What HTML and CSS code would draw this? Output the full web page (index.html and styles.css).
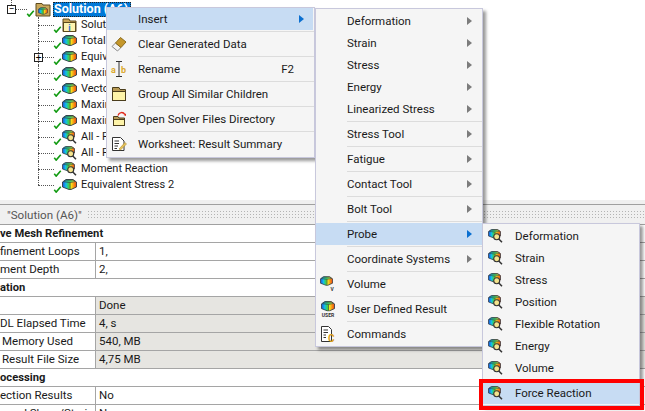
FILE: index.html
```html
<!DOCTYPE html>
<html lang="en">
<head>
<meta charset="utf-8">
<title>Solution context menu</title>
<link rel="stylesheet" href="styles.css">
</head>
<body>
<svg class="defs" width="0" height="0" aria-hidden="true">
  <defs>
    <linearGradient id="spec" x1="0" y1="0" x2="1" y2="0"><stop offset="0" stop-color="#1c4fe0"/><stop offset=".25" stop-color="#12c0e8"/><stop offset=".45" stop-color="#3cd24a"/><stop offset=".62" stop-color="#f8e41a"/><stop offset="1" stop-color="#f04010"/></linearGradient>
    <linearGradient id="top" x1="0" y1="0" x2="1" y2="0"><stop offset="0" stop-color="#1494c8"/><stop offset=".55" stop-color="#3cc860"/><stop offset="1" stop-color="#e8d838"/></linearGradient>
    <symbol id="cube" viewBox="0 0 15 11">
      <path d="M4 .5H11L14.500 3V8L9 10.500H7L.5 8V3Z" fill="url(#spec)" stroke="#2f3c42" stroke-width=".9"/>
      <path d="M1.500 2.800 4.500 1.100H10.800L13.400 2.600 8 3.600Z" fill="url(#top)" stroke="#2f3c42" stroke-width=".6"/>
      <path d="M8 3.600V10" stroke="#2f3c42" stroke-width=".7" fill="none"/>
    </symbol>
    <symbol id="probe" viewBox="0 0 15 14">
      <use href="#cube" width="13" height="9.500"/>
      <circle cx="8.700" cy="7.700" r="3" fill="#f4e48c" stroke="#333" stroke-width="1.100"/>
      <path d="M10.800 9.900 14 13.300" stroke="#333" stroke-width="1.500"/>
    </symbol>
  </defs>
</svg>

<section class="tree">
  <div class="root">
    <span class="expander">&#8722;</span>
    <svg class="check" viewBox="0 0 9 8"><path d="M.8 4.200 3 7 8.200 .8" class="tick"/></svg>
    <svg class="root-icon" viewBox="0 0 16 15">
      <path d="M1 4V1.500H7L8 3H15V14H1Z" fill="#c9a75a" stroke="#5c4a1e"/>
      <use href="#cube" x="3" y="5" width="10" height="8"/>
    </svg>
    <span class="root-label">Solution (A6)</span>
  </div>
  <ul class="nodes">
    <li class="node">
      <svg class="check" viewBox="0 0 9 8"><path d="M.8 4.200 3 7 8.200 .8" class="tick"/></svg>
      <svg class="tree-icon tall" viewBox="0 0 15 14">
        <path d="M1 4V1H7L8 3H14V13.500H1Z" fill="#c9a75a" stroke="#5c4a1e"/>
        <rect x="1.500" y="4.500" width="12" height="9" fill="#fdf4b0" stroke="#5c4a1e"/>
        <text x="7.500" y="12.500" class="info-i">i</text>
      </svg>
      <span>Solution Information</span>
    </li>
    <li class="node"><svg class="check" viewBox="0 0 9 8"><path d="M.8 4.200 3 7 8.200 .8" class="tick"/></svg><svg class="tree-icon"><use href="#cube"/></svg><span>Total Deformation</span></li>
    <li class="node"><span class="expander plus">+</span><svg class="check" viewBox="0 0 9 8"><path d="M.8 4.200 3 7 8.200 .8" class="tick"/></svg><svg class="tree-icon"><use href="#cube"/></svg><span>Equivalent Stress</span></li>
    <li class="node"><svg class="check" viewBox="0 0 9 8"><path d="M.8 4.200 3 7 8.200 .8" class="tick"/></svg><svg class="tree-icon"><use href="#cube"/></svg><span>Maximum Principal Stress</span></li>
    <li class="node"><svg class="check" viewBox="0 0 9 8"><path d="M.8 4.200 3 7 8.200 .8" class="tick"/></svg><svg class="tree-icon"><use href="#cube"/></svg><span>Vector Principal Stress</span></li>
    <li class="node"><svg class="check" viewBox="0 0 9 8"><path d="M.8 4.200 3 7 8.200 .8" class="tick"/></svg><svg class="tree-icon"><use href="#cube"/></svg><span>Maximum Shear Stress</span></li>
    <li class="node"><svg class="check" viewBox="0 0 9 8"><path d="M.8 4.200 3 7 8.200 .8" class="tick"/></svg><svg class="tree-icon"><use href="#cube"/></svg><span>Maximum Principal Elastic</span></li>
    <li class="node"><svg class="check" viewBox="0 0 9 8"><path d="M.8 4.200 3 7 8.200 .8" class="tick"/></svg><svg class="tree-icon tall"><use href="#probe"/></svg><span>All - Force Reactions</span></li>
    <li class="node"><svg class="check" viewBox="0 0 9 8"><path d="M.8 4.200 3 7 8.200 .8" class="tick"/></svg><svg class="tree-icon tall"><use href="#probe"/></svg><span>All - Force Reactions - Fixed Supports</span></li>
    <li class="node"><svg class="check" viewBox="0 0 9 8"><path d="M.8 4.200 3 7 8.200 .8" class="tick"/></svg><svg class="tree-icon tall"><use href="#probe"/></svg><span>Moment Reaction</span></li>
    <li class="node node-last"><svg class="check" viewBox="0 0 9 8"><path d="M.8 4.200 3 7 8.200 .8" class="tick"/></svg><svg class="tree-icon"><use href="#cube"/></svg><span>Equivalent Stress 2</span></li>
  </ul>
</section>

<section class="details">
  <header class="details-title"><span>"Solution (A6)"</span><i class="grip"></i></header>
  <div class="group">ve Mesh Refinement</div>
  <div class="row"><div class="label">finement Loops</div><div class="value">1,</div></div>
  <div class="row"><div class="label">ment Depth</div><div class="value">2,</div></div>
  <div class="group">ation</div>
  <div class="row readonly"><div class="label"></div><div class="value">Done</div></div>
  <div class="row readonly"><div class="label">DL Elapsed Time</div><div class="value">4, s</div></div>
  <div class="row readonly"><div class="label shifted">Memory Used</div><div class="value">540, MB</div></div>
  <div class="row readonly"><div class="label shifted">Result File Size</div><div class="value">4,75 MB</div></div>
  <div class="group">ocessing</div>
  <div class="row"><div class="label">ection Results</div><div class="value">No</div></div>
  <div class="row"><div class="label indented">ned Shear/Strain</div><div class="value">No</div></div>
</section>

<nav class="menu menu-main">
  <div class="item active"><span class="slot"></span><span class="text">Insert</span><i class="arrow"></i></div>
  <hr>
  <div class="item"><span class="slot"><svg class="ico" viewBox="0 0 16 16"><path d="M1 10.500 4.500 7 10 11.500 6.500 15Z" fill="#f4f4f4" stroke="#8a8a8a"/><path d="M4.500 7 9.500 1.500 15 6 10 11.500Z" fill="#c5972a" stroke="#8a6a1c"/></svg></span><span class="text">Clear Generated Data</span></div>
  <hr>
  <div class="item"><span class="slot"><svg class="ico" viewBox="0 0 16 16"><path d="M5 .5H11M8 .5V15.500M5 15.500H11" stroke="#333" fill="none"/><text x="0" y="12" class="ab">a</text><text x="10" y="12" class="ab">b</text></svg></span><span class="text">Rename</span><span class="key">F2</span></div>
  <hr>
  <div class="item"><span class="slot"><svg class="ico" viewBox="0 0 16 16"><path d="M1.500 14.500V1.500H8L9 3.500H14.500V14.500Z" fill="#b79a55" stroke="#4a3d1c"/><rect x="1.500" y="5.500" width="13" height="9" fill="#fdf3a8" stroke="#4a3d1c"/></svg></span><span class="text">Group All Similar Children</span></div>
  <hr>
  <div class="item"><span class="slot"><svg class="ico" viewBox="0 0 16 16"><path d="M2.500 14.500V5.500H7L8 7H13.500V14.500Z" fill="#b79a55" stroke="#4a3d1c"/><rect x="2.500" y="8.500" width="11" height="6" fill="#fdf3a8" stroke="#4a3d1c"/><path d="M7 4.500C8 1 12 .5 14 3.500" fill="none" stroke="#e02a1c" stroke-width="1.300"/><path d="M15 5 12.500 4 15 2.500Z" fill="#e02a1c"/></svg></span><span class="text">Open Solver Files Directory</span></div>
  <hr>
  <div class="item"><span class="slot"><svg class="ico" viewBox="0 0 16 16"><path d="M1.500 1.500H9.500L13 5V14.500H1.500Z" fill="#fff" stroke="#333"/><path d="M3.500 5H8M3.500 7.500H8M3.500 10H7M3.500 12.500H6" stroke="#333"/><path d="M8 13 14 6.500 15.500 8 9.500 14Z" fill="#e9c45a" stroke="#a98a2c" stroke-width=".6"/></svg></span><span class="text">Worksheet: Result Summary</span></div>
</nav>

<nav class="menu menu-insert">
  <div class="item"><span class="slot"></span><span class="text">Deformation</span><i class="arrow"></i></div>
  <div class="item"><span class="slot"></span><span class="text">Strain</span><i class="arrow"></i></div>
  <div class="item"><span class="slot"></span><span class="text">Stress</span><i class="arrow"></i></div>
  <div class="item"><span class="slot"></span><span class="text">Energy</span><i class="arrow"></i></div>
  <div class="item"><span class="slot"></span><span class="text">Linearized Stress</span><i class="arrow"></i></div>
  <hr>
  <div class="item"><span class="slot"></span><span class="text">Stress Tool</span><i class="arrow"></i></div>
  <hr>
  <div class="item"><span class="slot"></span><span class="text">Fatigue</span><i class="arrow"></i></div>
  <hr>
  <div class="item"><span class="slot"></span><span class="text">Contact Tool</span><i class="arrow"></i></div>
  <hr>
  <div class="item"><span class="slot"></span><span class="text">Bolt Tool</span><i class="arrow"></i></div>
  <hr>
  <div class="item active"><span class="slot"></span><span class="text">Probe</span><i class="arrow"></i></div>
  <hr>
  <div class="item"><span class="slot"></span><span class="text">Coordinate Systems</span><i class="arrow"></i></div>
  <hr>
  <div class="item"><span class="slot"><svg class="ico" viewBox="0 0 16 16"><use href="#cube" width="13" height="10"/><text x="10.500" y="15" class="tag">V</text></svg></span><span class="text">Volume</span></div>
  <hr>
  <div class="item"><span class="slot"><svg class="ico" viewBox="0 0 16 16"><use href="#cube" x="1" width="14" height="10.500"/><text x="8" y="16" class="tag tag-user">USER</text></svg></span><span class="text">User Defined Result</span></div>
  <hr>
  <div class="item"><span class="slot"><svg class="ico" viewBox="0 0 16 16"><path d="M1.500 .5H8.500L11.500 3.500V15.500H1.500Z" fill="#fff" stroke="#333"/><path d="M3.500 4H8M3.500 6.500H8M3.500 9H6M3.500 11.500H6" stroke="#333"/><text x="8" y="15.500" class="c-mark">C</text></svg></span><span class="text">Commands</span></div>
</nav>

<nav class="menu menu-probe">
  <div class="item"><span class="slot"><svg class="ico probe-ico"><use href="#probe"/></svg></span><span class="text">Deformation</span></div>
  <div class="item"><span class="slot"><svg class="ico probe-ico"><use href="#probe"/></svg></span><span class="text">Strain</span></div>
  <div class="item"><span class="slot"><svg class="ico probe-ico"><use href="#probe"/></svg></span><span class="text">Stress</span></div>
  <div class="item"><span class="slot"><svg class="ico probe-ico"><use href="#probe"/></svg></span><span class="text">Position</span></div>
  <div class="item"><span class="slot"><svg class="ico probe-ico"><use href="#probe"/></svg></span><span class="text">Flexible Rotation</span></div>
  <div class="item"><span class="slot"><svg class="ico probe-ico"><use href="#probe"/></svg></span><span class="text">Energy</span></div>
  <div class="item"><span class="slot"><svg class="ico probe-ico"><use href="#probe"/></svg></span><span class="text">Volume</span></div>
  <hr>
  <div class="item active"><span class="slot"><svg class="ico probe-ico"><use href="#probe"/></svg></span><span class="text">Force Reaction</span></div>
</nav>

<div class="callout"></div>
</body>
</html>
```
FILE: styles.css
```css
* { box-sizing: border-box; }
html, body { margin: 0; height: 100%; }
body {
  position: relative;
  width: 645px;
  height: 411px;
  overflow: hidden;
  background: #fff;
  color: #1a1a1a;
  font: 11.5px/16px Roboto, sans-serif;
}
.defs { position: absolute; }

/* tree */
.tree { height: 200px; padding-top: 1px; }
.root { position: relative; display: flex; align-items: center; height: 16px; padding-left: 7px; }
.root::before { content: ""; position: absolute; left: 16px; width: 11px; top: 8px; border-top: 1px dotted #555; }
.root::after { content: ""; position: absolute; left: 11px; top: -1px; height: 7px; border-left: 1px dotted #555; }
.expander {
  position: relative; z-index: 1;
  display: flex; align-items: center; justify-content: center;
  width: 9px; height: 9px;
  border: 1px solid #222; background: #fff;
  font-size: 10px; line-height: 1; color: #000;
}
.root .check { margin-left: 10px; }
.check { position: relative; z-index: 1; flex: none; width: 9px; height: 7px; align-self: flex-end; }
.tick { fill: none; stroke: #109a10; stroke-width: 1.8; }
.tree-icon { flex: none; width: 15px; height: 11px; align-self: flex-start; margin-top: 2px; }
.tree-icon.tall { height: 14px; margin-top: 1px; }
.root-icon { flex: none; width: 16px; height: 15px; }
.root-label {
  margin-left: 2px; width: 78px; height: 15px;
  padding-left: 1px;
  background: #0078d7; color: #fff; font-size: 12.5px; font-weight: 700; line-height: 14px;
  outline: 1px dotted #222; outline-offset: -1px; white-space: nowrap; overflow: hidden;
}
.nodes { margin: 0; padding: 0; list-style: none; font-size: 11px; }
.node {
  position: relative;
  display: flex; align-items: center;
  height: 16px; padding-left: 53px; white-space: nowrap;
}
.node > span:last-child { margin-left: 4px; }
.node::before { content: ""; position: absolute; left: 38px; top: 0; bottom: 0; border-left: 1px dotted #555; }
.node::after { content: ""; position: absolute; left: 38px; width: 16px; top: 8px; border-top: 1px dotted #555; }
.node-last::before { bottom: 8px; }
.plus { position: absolute; left: 34px; top: 4px; z-index: 2; }

/* details */
.details { border-top: 4px solid #f0f0f0; }
.details-title {
  display: flex; align-items: center; gap: 5px;
  height: 21px; padding-left: 7px;
  background: #f0f0f0; color: #555;
  border-top: 1px solid #a0a0a0; border-bottom: 1px solid #a0a0a0;
  font-size: 11.6px; white-space: nowrap;
}
.grip { flex: 1; height: 9px; background: radial-gradient(circle, #b4b4b4 .7px, transparent 1px) 0 0 / 3px 3px; }
.group, .row { height: 18px; border-bottom: 1px solid #a5a5a5; line-height: 17px; white-space: nowrap; }
.group { font-size: 11.2px; font-weight: 700; line-height: 18px; }
.row { display: flex; }
.label { flex: none; width: 96px; border-right: 1px solid #a5a5a5; overflow: hidden; }
.label.shifted { padding-left: 2px; }
.label.indented { padding-left: 8px; }
.value { flex: 1; padding-left: 3px; }
.readonly .value { background: #e6e5e1; }

/* menus */
.menu {
  position: absolute;
  display: flex; flex-direction: column;
  background: #f5f5f5;
  border: 1px solid #c8c8dc;
  box-shadow: 3px 3px 3px rgba(0, 0, 0, .4);
}
.menu-main { left: 106px; top: 7px; width: 209px; padding: 0 1px 0 0; height: 151px; }
.menu-insert { left: 315px; top: 8px; width: 168px; padding: 1px 0; }
.menu-probe { left: 482px; top: 223px; width: 158px; padding: 1px 0; }
.item { display: flex; align-items: center; flex: none; height: 22px; white-space: nowrap; }
.slot { flex: none; width: 31px; height: 16px; padding-left: 4px; display: flex; align-items: center; }
.menu-probe .slot { width: 32px; padding-left: 5px; }
.ico { display: block; width: 16px; height: 16px; overflow: visible; }
.probe-ico { width: 15px; height: 14px; }
.text { flex: 1; }
.key { margin-right: 19px; }
.active { background: #c7dcf3; }
.arrow {
  width: 0; height: 0; margin-right: 10px;
  border-left: 5px solid #7c7c7c;
  border-top: 4px solid transparent; border-bottom: 4px solid transparent;
}
.active .arrow { border-left-color: #0a6fd0; }
.menu hr {
  flex: none; height: 1px; margin: 1px 0 1px 31px;
  border: 0; background: #dcdcdc;
}
.menu-main .active .arrow { margin-right: 9px; }
.menu-main hr { margin-right: -1px; }
.menu-probe hr { margin-left: 32px; }

/* svg text marks */
.info-i { font: 700 9px Roboto, sans-serif; fill: #2a6fd0; text-anchor: middle; }
.ab { font: 700 9px Roboto, sans-serif; fill: #dba92c; }
.tag { font: 700 5px Roboto, sans-serif; fill: #333; }
.tag-user { text-anchor: middle; }
.c-mark { font: 700 10px Roboto, sans-serif; fill: #dba01a; }

.callout {
  position: absolute; left: 479px; top: 379px; width: 165px; height: 31px;
  border: 4px solid #f00;
}
```
